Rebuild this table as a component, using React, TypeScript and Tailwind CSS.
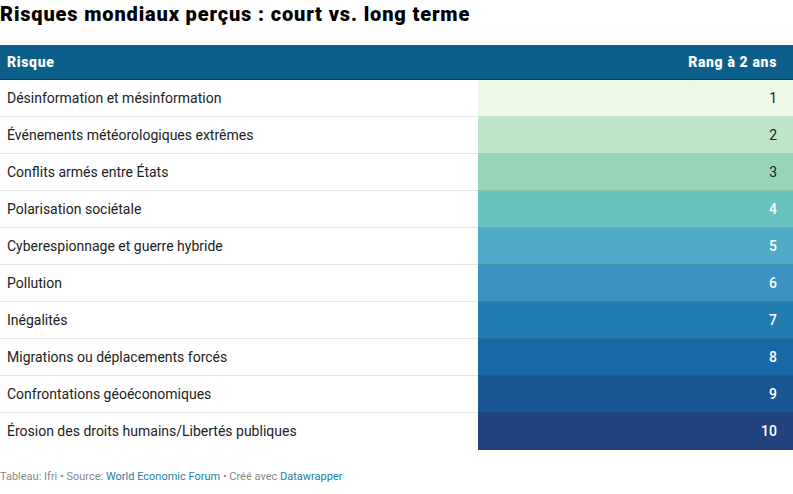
const rows: { label: string; rank: number; bg: string; dark: boolean }[] = [
  { label: "Désinformation et mésinformation", rank: 1, bg: "bg-[#edf8e6]", dark: true },
  { label: "Événements météorologiques extrêmes", rank: 2, bg: "bg-[#bee6c6]", dark: true },
  { label: "Conflits armés entre États", rank: 3, bg: "bg-[#97d5b8]", dark: true },
  { label: "Polarisation sociétale", rank: 4, bg: "bg-[#69c2be]", dark: false },
  { label: "Cyberespionnage et guerre hybride", rank: 5, bg: "bg-[#4eaac5]", dark: false },
  { label: "Pollution", rank: 6, bg: "bg-[#3a93c0]", dark: false },
  { label: "Inégalités", rank: 7, bg: "bg-[#247db2]", dark: false },
  { label: "Migrations ou déplacements forcés", rank: 8, bg: "bg-[#1669a5]", dark: false },
  { label: "Confrontations géoéconomiques", rank: 9, bg: "bg-[#1a5594]", dark: false },
  { label: "Érosion des droits humains/Libertés publiques", rank: 10, bg: "bg-[#23437e]", dark: false },
];

export default function App() {
  return (
    <div className="w-[793px] h-[494px] bg-white font-['Roboto',sans-serif] text-[#222]">
      <h1 className="text-[20px] leading-[28px] font-black text-black tracking-[0.85px]">
        Risques mondiaux perçus : court vs. long terme
      </h1>
      <div className="mt-[17px]">
        <div className="flex h-[35px] items-center bg-[#0b5f8a] border-b border-[#333] text-white text-[14px] font-black tracking-[0.65px]">
          <div className="w-[478px] pl-[7px]">Risque</div>
          <div className="flex-1 text-right pr-[16px]">Rang à 2 ans</div>
        </div>
        {rows.map((r, i) => {
          const last = i === rows.length - 1;
          return (
            <div key={r.rank} className="flex h-[37px] text-[14px]">
              <div
                className={
                  "w-[478px] pl-[7px] flex items-center " +
                  (last ? "" : "border-b border-[#e6e6e6]")
                }
              >
                {r.label}
              </div>
              <div
                className={
                  "flex-1 flex items-center justify-end pr-[16px] " +
                  r.bg +
                  (last ? "" : " border-b border-black/10") +
                  (r.dark ? " text-[#222]" : " text-white font-medium")
                }
              >
                {r.rank}
              </div>
            </div>
          );
        })}
      </div>
      <p className="mt-[19px] text-[11px] text-[#888]">
        Tableau: Ifri • Source: <span className="text-[#1d81a2]">World Economic Forum</span> • Créé avec{" "}
        <span className="text-[#1d81a2]">Datawrapper</span>
      </p>
    </div>
  );
}
